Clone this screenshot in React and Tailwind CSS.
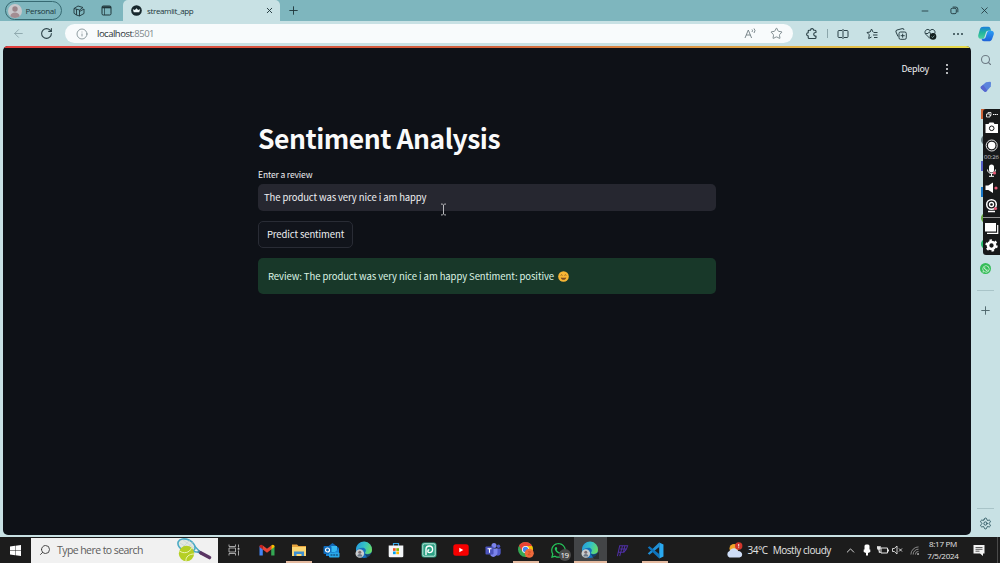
import {
  ArrowLeft, RotateCw, Info, Star, X, Plus, Search, Settings, Minus, ChevronUp,
} from 'lucide-react';
import { FaWhatsapp } from 'react-icons/fa';

const Edge = ({ badge }) => (
  <svg viewBox="0 0 18 18" className="w-[18px] h-[18px]">
    <defs>
      <linearGradient id="edgeTop" x1="0" x2="1" y1="0.3" y2="0.6">
        <stop offset="0" stopColor="#279bdc" />
        <stop offset="0.5" stopColor="#34c3c4" />
        <stop offset="1" stopColor="#6bdc62" />
      </linearGradient>
    </defs>
    <circle cx="9" cy="9" r="8" fill="#1670bd" />
    <path d="M1 8a8 8 0 0 1 16 1c0 3-2.500 4.200-5 4-2-.2-2.500-1-1.700-2 1.300-1.700.2-4.300-2.700-4.300C4.500 6.700 2 8 1 10z" fill="url(#edgeTop)" />
    <path d="M9.500 12.500c2 1.500 5 1.200 8.500-1.500v7h-5z" fill="#1c1c1c" opacity="0.55" />
    {badge && (
      <g>
        <circle cx="4.800" cy="12.500" r="4.300" fill="#c9cdcf" />
        <circle cx="4.800" cy="11.200" r="1.500" fill="#7d6d70" />
        <path d="M2.300 15.500c.3-3.200 4.700-3.200 5 0z" fill="#6b7785" />
      </g>
    )}
  </svg>
);

const TaskView = () => (
  <svg viewBox="0 0 12 12" className="w-[12px] h-[12px]" fill="none" stroke="#c9c9c9">
    <path d="M1 .5v2h6.500v-2M1 11.500v-2h6.500v2M1 4h6.500v4H1zM10.500.5v3M10.500 6.500v5" strokeWidth="0.8" />
    <path d="M9.700 4h1.700v1.700H9.700z" fill="#c9c9c9" stroke="none" />
  </svg>
);

const Gmail = () => (
  <svg viewBox="0 0 16 12" className="w-[16px] h-[12px]">
    <path d="M0.500 2v9.500h3.300V5z" fill="#4285f4" />
    <path d="M15.500 2v9.500h-3.300V5z" fill="#34a853" />
    <path d="M12.200 1.500v4l3.300-2.500C15.800.8 13.700 0 12.200 1.500z" fill="#fbbc04" />
    <path d="M3.800 1.500v4L.5 3C.2.8 2.300 0 3.800 1.500z" fill="#c5221f" />
    <path d="M3.800 1.500 8 4.800l4.200-3.300v4L8 8.700 3.800 5.500z" fill="#ea4335" />
  </svg>
);

const Folder = () => (
  <svg viewBox="0 0 16 14" className="w-[16px] h-[14px]">
    <path d="M1 1.500h5l1.500 1.500H15v3H1z" fill="#e8a33d" />
    <path d="M1 4h14v9H1z" fill="#fbd673" />
    <path d="M3 13V8.500h10V13h-2.500v-2h-5v2z" fill="#3f8fd0" />
  </svg>
);

const Outlook = () => (
  <svg viewBox="0 0 17 16" className="w-[17px] h-[16px]">
    <path d="M3 6 9.500 1 16 6v8H3z" fill="#1267b4" />
    <path d="M5 4h9v6H5z" fill="#35b8f1" />
    <path d="M3 8l6.500 4L16 6.500V14H3z" fill="#1a86d8" />
    <rect x="0.500" y="4" width="8" height="8" rx="1" fill="#0f6cbd" />
    <circle cx="4.500" cy="8" r="2" fill="none" stroke="#fff" strokeWidth="1.200" />
    <rect x="6" y="10.500" width="10.500" height="5" rx="1" fill="#28a8ea" />
    <path d="M7.500 13h7.500" stroke="#145a8c" strokeWidth="1.500" strokeDasharray="2 .7" />
  </svg>
);

const Store = () => (
  <svg viewBox="0 0 16 16" className="w-[16px] h-[16px]">
    <path d="M5.500 4V1.500h5V4" fill="none" stroke="#35a5e5" strokeWidth="1.200" />
    <path d="M.7 3.500h14.600V14a1.300 1.300 0 0 1-1.300 1.300H2A1.300 1.300 0 0 1 .7 14z" fill="#f4f6f8" />
    <path d="M5 6.200h2.700v2.700H5z" fill="#f25022" />
    <path d="M8.300 6.200H11v2.700H8.300z" fill="#7fba00" />
    <path d="M5 9.500h2.700v2.700H5z" fill="#00a4ef" />
    <path d="M8.300 9.500H11v2.700H8.300z" fill="#ffb900" />
  </svg>
);

const Picsart = () => (
  <svg viewBox="0 0 16 16" className="w-[16px] h-[16px]" fill="none">
    <rect x="0.500" y="0.500" width="15" height="15" rx="2.500" fill="#2aa083" />
    <rect x="1.800" y="1.800" width="12.400" height="12.400" rx="1.500" stroke="#e6f5f0" strokeWidth="0.800" />
    <path d="M5 13V7.300a3.300 3.300 0 1 1 3.300 3.300c-2 0-2-2.800 0-2.800" stroke="#fff" strokeWidth="1.400" />
  </svg>
);

const YouTube = () => (
  <svg viewBox="0 0 16 12" className="w-[16px] h-[12px]">
    <rect x="0.300" y="0.300" width="15.400" height="11.400" rx="2.500" fill="#f70000" />
    <path d="M6.300 3.800v4.400l4-2.200z" fill="#fff" />
  </svg>
);

const Teams = () => (
  <svg viewBox="0 0 16 16" className="w-[16px] h-[16px]">
    <circle cx="9" cy="3.500" r="2.500" fill="#7b83eb" />
    <circle cx="13.500" cy="4.200" r="1.700" fill="#5059c9" />
    <path d="M11 6.500h4.700V11c0 2-2 3-4 2.500z" fill="#5059c9" />
    <path d="M5.500 6.500h7V11a4 4 0 0 1-7 2.500z" fill="#7b83eb" />
    <rect x="0.500" y="4.500" width="8" height="8" rx="0.800" fill="#4b53bc" />
    <path d="M2.500 6.700h4M4.500 6.700v4" stroke="#fff" strokeWidth="1.100" />
  </svg>
);

const Chrome = () => (
  <svg viewBox="0 0 18 18" className="w-[18px] h-[18px]">
    <circle cx="8.500" cy="8.500" r="7.500" fill="#34a853" />
    <path d="M8.500 8.500 2 4.800A7.500 7.500 0 0 1 15 4.800z" fill="#ea4335" />
    <path d="M8.500 1a7.500 7.500 0 0 1-6.500 3.800L5.300 10.400 8.500 5z" fill="#ea4335" />
    <path d="M8.500 5h6.600a7.500 7.500 0 0 1-6.700 11l3.300-5.700z" fill="#fbbc04" />
    <circle cx="8.500" cy="8.500" r="3.500" fill="#fff" />
    <circle cx="8.500" cy="8.500" r="2.700" fill="#4285f4" />
    <circle cx="12.300" cy="12.300" r="4.500" fill="#ee6a3c" />
    <path d="M11 10.800h2.600l-2.600 3h2.600" stroke="#c8431c" fill="none" strokeWidth="0.700" />
  </svg>
);

const WhatsAppTask = () => (
  <span className="relative flex">
    <FaWhatsapp className="w-[17px] h-[17px] text-[#25c45a]" />
    <span className="absolute left-[9px] top-[7px] w-[12px] h-[12px] rounded-full bg-[#4a4a4a] text-white text-[8px] leading-[12px] tracking-[-0.5px] text-center">19</span>
  </span>
);

const Figure = () => (
  <svg viewBox="0 0 14 14" className="w-[13px] h-[13px]" fill="none" stroke="#4f2fa5">
    <path d="M1.500 13 4 2h8.500l-1.300 3.500H4.500M3 9h5.500l2.700-3.500M7 2 4 13M9.500 2 8 9" strokeWidth="1.100" />
  </svg>
);

const VSCode = () => (
  <svg viewBox="0 0 16 16" className="w-[17px] h-[17px]">
    <path d="M11.500.5 15.500 2.300v11.400l-4 1.800z" fill="#2aa9f0" />
    <path d="M11.500.5v4.200L2.300 12 .7 10.800z" fill="#1f8fd6" />
    <path d="M11.500 15.500v-4.200L2.300 4 .7 5.200z" fill="#0f74bd" />
  </svg>
);

const taskApps = [
  { name: 'task view', icon: <TaskView /> },
  { name: 'gmail', icon: <Gmail /> },
  { name: 'files', icon: <Folder />, open: true },
  { name: 'outlook', icon: <Outlook /> },
  { name: 'edge', icon: <Edge badge /> },
  { name: 'store', icon: <Store /> },
  { name: 'picsart', icon: <Picsart /> },
  { name: 'youtube', icon: <YouTube /> },
  { name: 'teams', icon: <Teams /> },
  { name: 'chrome', icon: <Chrome />, open: true },
  { name: 'whatsapp', icon: <WhatsAppTask /> },
  { name: 'edge window', icon: <Edge badge />, open: true, active: true },
  { name: 'figure', icon: <Figure /> },
  { name: 'vscode', icon: <VSCode />, open: true },
];

function TabStrip() {
  return (
    <div className="flex h-[21px] bg-[#7eb6be] text-[#20363b]">
      <div className="flex items-center w-[123px] pl-[5px]">
        <div className="flex items-center w-[57px] h-[19px] rounded-full border border-[#376a72] pl-[2px]">
          <svg viewBox="0 0 14 14" className="w-[14px] h-[14px] shrink-0">
            <circle cx="7" cy="7" r="7" fill="#c9c8cc" />
            <circle cx="7" cy="5" r="2.700" fill="#9a8489" />
            <path d="M2.300 12.200c.6-5 8.800-5 9.400 0A7 7 0 0 1 7 14a7 7 0 0 1-4.700-1.800z" fill="#a38d92" />
          </svg>
          <span className="ml-[3.500px] text-[8px] tracking-[-0.3px] leading-none">Personal</span>
        </div>
        <svg viewBox="0 0 12 12" className="w-[12px] h-[12px] ml-[11px]" fill="none" stroke="currentColor" strokeWidth="0.900">
          <path d="M1 3.500 5 1l5 1.500L6.500 5zM1 3.500v4.800L3.500 10M6.500 5v6l-3-1V4.200M6.500 11 11 8.500V4L6.500 6.500" strokeLinejoin="round" />
        </svg>
        <svg viewBox="0 0 11 11" className="w-[11px] h-[11px] ml-[16px]" fill="none" stroke="currentColor">
          <rect x="1" y="1" width="9" height="9" rx="1.300" />
          <path d="M1 2.300h9" strokeWidth="2" />
          <path d="M3.500 3v7" strokeWidth="0.700" />
        </svg>
      </div>
      <div className="flex items-center w-[157px] bg-[#c8e1e4] rounded-t-[5px] pl-[8px] pr-[6px]">
        <svg viewBox="0 0 12 12" className="w-[11px] h-[11px]">
          <circle cx="6" cy="6" r="5.800" fill="#17272c" />
          <path d="M2 4.500 4.200 5.500 6 3.500l1.800 2L10 4.500 9 7.800H3z" fill="#e9f4f5" />
        </svg>
        <span className="ml-[5px] text-[8px] tracking-[-0.35px] leading-none flex-1">streamlit_app</span>
        <X className="w-[9px] h-[9px]" strokeWidth={2.500} />
      </div>
      <Plus className="w-[13px] h-[13px] mt-[4px] ml-[7px]" strokeWidth={1.700} />
      <div className="flex items-center ml-auto pr-[10px] gap-[20px]">
        <Minus className="w-[10px] h-[10px]" strokeWidth={2} />
        <svg viewBox="0 0 10 10" className="w-[9px] h-[9px]" fill="none" stroke="currentColor">
          <rect x="1" y="2.500" width="6" height="6" rx="1.500" />
          <path d="M3 1.200h3.500A2.300 2.300 0 0 1 8.700 3.500V7" />
        </svg>
        <X className="w-[11px] h-[11px]" strokeWidth={1.800} />
      </div>
    </div>
  );
}

function Toolbar() {
  return (
    <div className="flex items-center h-[25px] bg-[#c8e1e4] text-[#2b4147]">
      <ArrowLeft className="w-[13px] h-[13px] ml-[12px] text-[#8ba6ab]" strokeWidth={1.700} />
      <RotateCw className="w-[13px] h-[13px] ml-[15px]" strokeWidth={2} />
      <div className="flex items-center w-[728px] h-[19px] ml-[12px] rounded-full bg-[#f8fbfc] pl-[11px] pr-[10px]">
        <Info className="w-[12px] h-[12px] text-[#75858a]" strokeWidth={1.600} />
        <span className="ml-[9px] text-[9.500px] tracking-[-0.5px] leading-none text-[#2c3338]">
          localhost<span className="text-[#7d878b]">:8501</span>
        </span>
        <svg viewBox="0 0 12 11" className="w-[12px] h-[11px] ml-auto" fill="none" stroke="#6f7d82" strokeWidth="0.900">
          <path d="M1 10 4.300 2 7.600 10M2.200 7h4.200M8 1.500q1 1 0 2.500M10 .5q2 2 0 4.500" />
        </svg>
        <Star className="w-[13px] h-[13px] ml-[14px] text-[#6f7d82]" strokeWidth={1.600} />
      </div>
      <svg viewBox="0 0 12 12" className="w-[12px] h-[12px] ml-[13px]" fill="none" stroke="currentColor" strokeWidth="1.100" strokeLinejoin="round">
        <path d="M10 4.500V3.200A1 1 0 0 0 9 2.200H7.700a1.600 1.600 0 0 0-3.200 0H3.200a1 1 0 0 0-1 1v1.500a1.600 1.600 0 0 0 0 3.200V9.500a1 1 0 0 0 1 1H9a1 1 0 0 0 1-1V8C7 8.700 7 4 10 4.500z" />
      </svg>
      <span className="w-px h-[9px] ml-[9px] bg-[#8ba6ab]" />
      <svg viewBox="0 0 12 12" className="w-[12px] h-[12px] ml-[9px]" fill="none" stroke="currentColor">
        <path d="M5 2.500H2A1 1 0 0 0 1 3.500v5a1 1 0 0 0 1 1h3M7 2.500h3a1 1 0 0 1 1 1v5a1 1 0 0 1-1 1H7M6 1v10" />
      </svg>
      <svg viewBox="0 0 12 12" className="w-[12px] h-[12px] ml-[17px]" fill="none" stroke="currentColor" strokeLinejoin="round">
        <path d="M7 4 5.500 1 4.200 4 1 4.500l2.300 2.300-.6 3.700 2.800-1.500M7.500 4.500H11.500M7 7h4.500M8 9.500h3.500" />
      </svg>
      <svg viewBox="0 0 12 12" className="w-[12px] h-[12px] ml-[17px]" fill="none" stroke="currentColor">
        <rect x="4" y="4" width="7.300" height="7.300" rx="1.500" />
        <path d="M7.650 5.700v4M5.700 7.700h4M3 8.500 1 4A1.500 1.500 0 0 1 2 2l5-1.300A1.500 1.500 0 0 1 9 2" />
      </svg>
      <svg viewBox="0 0 13 12" className="w-[13px] h-[12px] ml-[17px]" fill="none" stroke="currentColor">
        <path d="M6 10.500 1.500 6C-.5 3 3.500-.5 6 2.700 8.500-.5 12.500 3 10.500 6M1.500 5.500H4L5.500 3.700 7 7l1-1.500h2" strokeLinejoin="round" />
        <circle cx="9" cy="8.500" r="3.300" fill="#13201f" stroke="none" />
        <path d="m7.500 8.600 1.100 1 1.800-2" stroke="#9fc4c8" strokeWidth="0.700" />
      </svg>
      <span className="flex gap-[2px] ml-[16px]">
        <i className="w-[2px] h-[2px] rounded-full bg-[#2b4147]" />
        <i className="w-[2px] h-[2px] rounded-full bg-[#2b4147]" />
        <i className="w-[2px] h-[2px] rounded-full bg-[#2b4147]" />
      </span>
      <svg viewBox="0 0 16 16" className="w-[16px] h-[16px] ml-auto mr-[6px]">
        <defs>
          <linearGradient id="copilotA" x1="0" x2="0" y1="0" y2="1">
            <stop offset="0" stopColor="#1a7fdc" />
            <stop offset="0.500" stopColor="#23b59b" />
            <stop offset="1" stopColor="#4fd0a0" />
          </linearGradient>
          <linearGradient id="copilotB" x1="0" x2="0" y1="0" y2="1">
            <stop offset="0" stopColor="#2a9df4" />
            <stop offset="1" stopColor="#1e62d8" />
          </linearGradient>
        </defs>
        <path d="M5.500.8h4.800c1.300 0 1.900.9 2.200 2l.6 2H10c-1.300 0-1.800.8-2.200 2l-1.300 4.200c-.4 1.300-1 1.800-2.400 1.800H3C1 12.800-.2 11.200.3 9L1.900 3.300C2.400 1.600 3.500.8 5.500.8z" fill="url(#copilotA)" />
        <path d="M10.500 15.200H5.900c-1.300 0-1.900-.9-2.200-2l-.1-.4h1.500c1.500 0 2.200-.6 2.600-1.800L9 6.800c.4-1.300 1.200-2 2.400-2h1.900c2 0 2.900 1.700 2.400 3.600l-1.600 4.500c-.6 1.600-1.600 2.300-3.600 2.300z" fill="url(#copilotB)" />
      </svg>
    </div>
  );
}

function Page() {
  return (
    <main className="flex flex-col w-[968px] h-[489px] rounded-[5px] overflow-hidden bg-[#0e1117] text-[#eeeff2] font-['Noto_Sans_CJK_SC','Noto_Sans',sans-serif]">
      <div className="h-[2px] shrink-0 bg-linear-to-r from-[#e0403f] via-[#d0603c] to-[#e6dc4c]" />
      <header className="flex items-center justify-end h-[42px] pr-[23px] text-[9px] tracking-[-0.3px]">
        <span>Deploy</span>
        <span className="flex flex-col gap-[2px] ml-[17px]">
          <i className="w-[2px] h-[2px] rounded-full bg-[#eeeff2]" />
          <i className="w-[2px] h-[2px] rounded-full bg-[#eeeff2]" />
          <i className="w-[2px] h-[2px] rounded-full bg-[#eeeff2]" />
        </span>
      </header>
      <section className="w-[458px] ml-[255px] mt-[29px]">
        <h1 className="text-[26.500px] font-bold tracking-[-0.48px] leading-[38px] text-[#fafafa] whitespace-nowrap">Sentiment Analysis</h1>
        <label className="block mt-[10px] text-[8.500px] tracking-[-0.13px] leading-[14px]">Enter a review</label>
        <div className="flex items-center h-[27px] mt-[3px] px-[6px] rounded-[5px] bg-[#262730] text-[9.500px] tracking-[-0.1px]">
          The product was very nice i am happy
        </div>
        <button className="flex items-center justify-center w-[95px] h-[27px] mt-[10px] rounded-[5px] border border-[#292c35] bg-[#11141b] text-[9.500px] tracking-[-0.1px]">
          Predict sentiment
        </button>
        <div className="flex items-center h-[36px] mt-[10px] px-[10px] rounded-[5px] bg-[#183829] text-[9.500px] tracking-[-0.08px] text-[#dcf3e4]">
          Review: The product was very nice i am happy Sentiment: positive
          <svg viewBox="0 0 12 12" className="w-[11px] h-[11px] ml-[4px]">
            <circle cx="6" cy="6" r="5.800" fill="#f7b534" />
            <path d="M2.900 4.800q1-1.300 2 0M7.100 4.800q1-1.300 2 0" fill="none" stroke="#67411c" strokeWidth="0.800" />
            <path d="M3 7q3 .8 6 0c-.4 3.400-5.600 3.400-6 0z" fill="#7c4a1e" />
          </svg>
        </div>
      </section>
    </main>
  );
}

function Sidebar() {
  return (
    <aside className="flex flex-col items-center flex-1 pt-[8px] pb-[7px] text-[#4a6268]">
      <Search className="w-[12px] h-[12px] text-[#6d7b85]" strokeWidth={2.200} />
      <svg viewBox="0 0 12 12" className="w-[12px] h-[12px] mt-[15px]">
        <path d="M6 1.200 10 .8q1 0 1 1L10.800 5.500 6.300 10.600q-1 .9-2 0L1 7.500q-.7-1 0-1.900z" fill="#5b84dc" />
        <path d="m1 7.500 3.300 3.100q1 .9 2 0l1-1.100L3.200 3.900 1 5.600q-.7.900 0 1.900z" fill="#5666cf" />
      </svg>
      <div className="flex flex-col gap-[16px] mt-[16px]">
        <i className="w-[10px] h-[10px] bg-[#cf6538]" />
        <i className="w-[10px] h-[10px] rounded-full bg-[#63777d]" />
        <i className="w-[10px] h-[10px] bg-[#5660c8]" />
        <i className="w-[10px] h-[10px] bg-[#1877c8]" />
        <i className="w-[10px] h-[10px] rounded-full bg-[#66a83c]" />
        <i className="w-[10px] h-[10px] rounded-full bg-[#20b866]" />
      </div>
      <span className="flex items-center justify-center w-[11px] h-[11px] mt-[14px] rounded-full bg-[#35bd58] text-white">
        <FaWhatsapp className="w-[8px] h-[8px]" />
      </span>
      <span className="w-[17px] h-px mt-[16px] bg-[#a9c4c8]" />
      <Plus className="w-[13px] h-[13px] mt-[13px]" strokeWidth={1.700} />
      <span className="w-[17px] h-px mt-auto bg-[#a9c4c8]" />
      <Settings className="w-[13px] h-[13px] mt-[8px] text-[#2f5964]" strokeWidth={1.800} />
    </aside>
  );
}

function Recorder() {
  return (
    <div className="absolute left-[983px] top-[109px] flex flex-col items-center w-[17px] h-[146px] rounded-l-[3px] bg-[#17191a] text-white">
      <svg viewBox="0 0 17 146" className="absolute inset-0 w-[17px] h-[146px]" fill="none" stroke="#fff">
        <path d="M3.500 5h3.500v3H3.500zM5 5V3.500h3V6.500H7" strokeWidth="0.800" />
        <path d="M10 5.500h5" strokeWidth="1" strokeDasharray="1.300 .5" />
        <path d="M2.500 15h3l1-1.500h4L11.500 15H15v9H2.500z" fill="#fff" stroke="none" />
        <circle cx="8.700" cy="19.300" r="2.300" stroke="#17191a" />
        <circle cx="8.700" cy="36.500" r="5.500" strokeWidth="0.900" />
        <circle cx="8.700" cy="36.500" r="3.700" fill="#fff" stroke="none" />
        <rect x="6" y="55.500" width="5" height="8" rx="2.500" fill="#fff" stroke="none" />
        <path d="M4.500 60.500c0 5.300 8 5.300 8 0M8.500 64.500V67M6 67.300h5" />
        <path d="M2.500 76.500h2.800L10 73.500v10.500L5.300 81H2.500z" fill="#fff" stroke="none" />
        <circle cx="8.500" cy="95.500" r="4.800" strokeWidth="1.500" />
        <circle cx="8.500" cy="95.500" r="2" strokeWidth="1.300" />
        <path d="M5 102.500h7" strokeWidth="1.500" />
        <path d="M0 108.500h17" stroke="#c9c9c9" strokeWidth="0.700" />
        <path d="M2 114h11v8.500H2z" fill="#fff" stroke="none" />
        <path d="M4 124.300H14.700V116" strokeWidth="1.200" />
        <circle cx="8.500" cy="136.500" r="3.500" strokeWidth="2.700" />
        <circle cx="8.500" cy="136.500" r="5.200" strokeWidth="2" strokeDasharray="2.450 3" />
        <g stroke="none" fill="#e85b78">
          <circle cx="11.500" cy="64" r="1.600" />
          <circle cx="13" cy="79" r="1.600" />
          <circle cx="12.500" cy="99.500" r="1.600" />
        </g>
      </svg>
      <span className="mt-[44px] text-[6px] leading-[8px] tracking-[-0.1px] text-[#c9cccd]">00:26</span>
    </div>
  );
}

function Taskbar() {
  return (
    <footer className="flex items-center h-[26px] bg-[#1c1c1c] text-[#e4e4e4]">
      <div className="flex items-center justify-center w-[31px]">
        <svg viewBox="0 0 12 12" className="w-[11px] h-[11px]" fill="#fff">
          <path d="M0 1.700 5.500.9v4.800H0zM6 .8 12 0v5.700H6zM0 6.200h5.500v4.900L0 10.300zM6 6.200h6V12l-6-.8z" />
        </svg>
      </div>
      <div className="flex items-center w-[187px] h-[25px] bg-[#f1f1f1] pl-[8px] pr-[6px] text-[#5c5c5c]">
        <Search className="w-[12px] h-[12px] -scale-x-100 text-[#3b3b3b]" strokeWidth={1.800} />
        <span className="ml-[6px] text-[10.500px] tracking-[-0.57px] leading-none whitespace-nowrap">Type here to search</span>
        <svg viewBox="0 0 36 24" className="w-[36px] h-[24px] ml-auto">
          <ellipse cx="10.500" cy="7.500" rx="9" ry="6" transform="rotate(25 10.500 7.500)" fill="#e3e8e0" stroke="#4cabc5" strokeWidth="1.600" />
          <path d="M4 5l13 8M7 2l11 8M5 11l9-9M9 13l8-9" stroke="#b8cdd0" strokeWidth="0.500" />
          <path d="M18.500 8 24.500 14.500 17 13.500" fill="none" stroke="#4cabc5" strokeWidth="1.500" />
          <path d="m22 13 3 2" stroke="#4a8aa8" strokeWidth="3" />
          <path d="m25 15 8.500 4.500" stroke="#5a3563" strokeWidth="3.600" strokeLinecap="round" />
          <circle cx="10.500" cy="15.500" r="7.700" fill="#b5cf24" />
          <path d="M3.500 13c4 3 10 2 12-3M10 23c-.5-4 3-7 8-7" fill="none" stroke="#eef5b5" strokeWidth="1" />
        </svg>
      </div>
      <nav className="flex h-full">
        {taskApps.map((app) => (
          <div key={app.name} className={`relative flex items-center justify-center w-[32.4px] ${app.active ? 'bg-[#434547]' : ''}`}>
            {app.icon}
            {app.open && <span className={`absolute bottom-0 h-[2px] bg-[#e3b99f] ${app.active ? 'inset-x-0' : 'inset-x-[3px]'}`} />}
          </div>
        ))}
      </nav>
      <div className="flex items-center ml-[55px] text-[10px] tracking-[-0.45px] whitespace-nowrap leading-none">
        <svg viewBox="0 0 17 16" className="w-[17px] h-[16px]">
          <circle cx="8" cy="6.500" r="4.500" fill="#f2a52a" />
          <path d="M3.500 15.500a3.500 3.500 0 0 1 0-6.500c2-4 7.500-3.500 8.500 0 5 0 5.500 6 1.500 6.500z" fill="#cfdef8" />
          <circle cx="12.700" cy="4" r="3.700" fill="#cf352b" />
          <path d="M12.700 2v2.500M12.700 5.300v.8" stroke="#fff" strokeWidth="0.900" />
        </svg>
        <span className="ml-[4px]">34°C</span>
        <span className="ml-[5px]">Mostly cloudy</span>
      </div>
      <div className="flex items-center flex-1 justify-end">
        <ChevronUp className="w-[13px] h-[13px]" strokeWidth={1.700} />
        <svg viewBox="0 0 8 12" className="w-[8px] h-[12px] ml-[6px]" fill="#fff">
          <rect x="1.500" y="0.500" width="5" height="7.500" rx="1.500" />
          <path d="M.7 5.500h6.600V8L5 9v2.500H3V9L.7 8z" />
        </svg>
        <svg viewBox="0 0 12 10" className="w-[12px] h-[10px] ml-[6px]" fill="none" stroke="#e4e4e4">
          <path d="M4 3h6.500v5H4zM11.500 4.500v2" />
          <path d="M0 1.500h3.500v2L2 5.500 0 3.500zM2 5v2.500h2" fill="#e4e4e4" strokeWidth="0.600" />
        </svg>
        <svg viewBox="0 0 11 10" className="w-[11px] h-[10px] ml-[3px]" fill="none" stroke="#e4e4e4" strokeWidth="0.900">
          <path d="M.5 3.500h1.800L5 1v8L2.300 6.500H.5zM7 3.500l3 3M10 3.500l-3 3" />
        </svg>
        <svg viewBox="0 0 10 10" className="w-[9px] h-[9px] ml-[7px]" fill="none" stroke="#a5a5a5" strokeWidth="0.900">
          <path d="M1 9.500A8.500 8.500 0 0 1 9.500 1M3.500 9.500a6 6 0 0 1 6-6M6 9.500A3.500 3.500 0 0 1 9.500 6" />
          <circle cx="9" cy="9" r="0.800" fill="#e4e4e4" />
        </svg>
        <div className="flex flex-col items-center w-[32px] ml-[8px] text-[8px] leading-[12px] tracking-[-0.25px] whitespace-nowrap">
          <span>8:17 PM</span>
          <span>7/5/2024</span>
        </div>
        <svg viewBox="0 0 12 12" className="w-[12px] h-[12px] ml-[14px]">
          <path d="M.5 1h11v8.500H10V12L7 9.500H.5z" fill="#f2f2f2" />
          <path d="M2.500 3.500h7M2.500 5.300h7M2.500 7.200h4" stroke="#333" strokeWidth="0.800" />
        </svg>
        <span className="w-px h-[26px] ml-[12px] mr-[2px] bg-[#4a4a4a]" />
      </div>
    </footer>
  );
}

export default function App() {
  return (
    <div className="relative flex flex-col w-[1000px] h-[563px] overflow-hidden bg-[#c8e1e4] font-['Open_Sans','Noto_Sans',sans-serif]">
      <TabStrip />
      <Toolbar />
      <div className="flex h-[491px] pl-[3px]">
        <Page />
        <Sidebar />
      </div>
      <Taskbar />
      <Recorder />
      <svg viewBox="0 0 7 13" className="absolute left-[440px] top-[203px] w-[7px] h-[13px]" fill="none" stroke="#c8c9cc" strokeWidth="0.900">
        <path d="M1 1q2 0 2.500 1Q4 1 6 1M3.500 2v9M1 12q2 0 2.500-1Q4 12 6 12" />
      </svg>
    </div>
  );
}
